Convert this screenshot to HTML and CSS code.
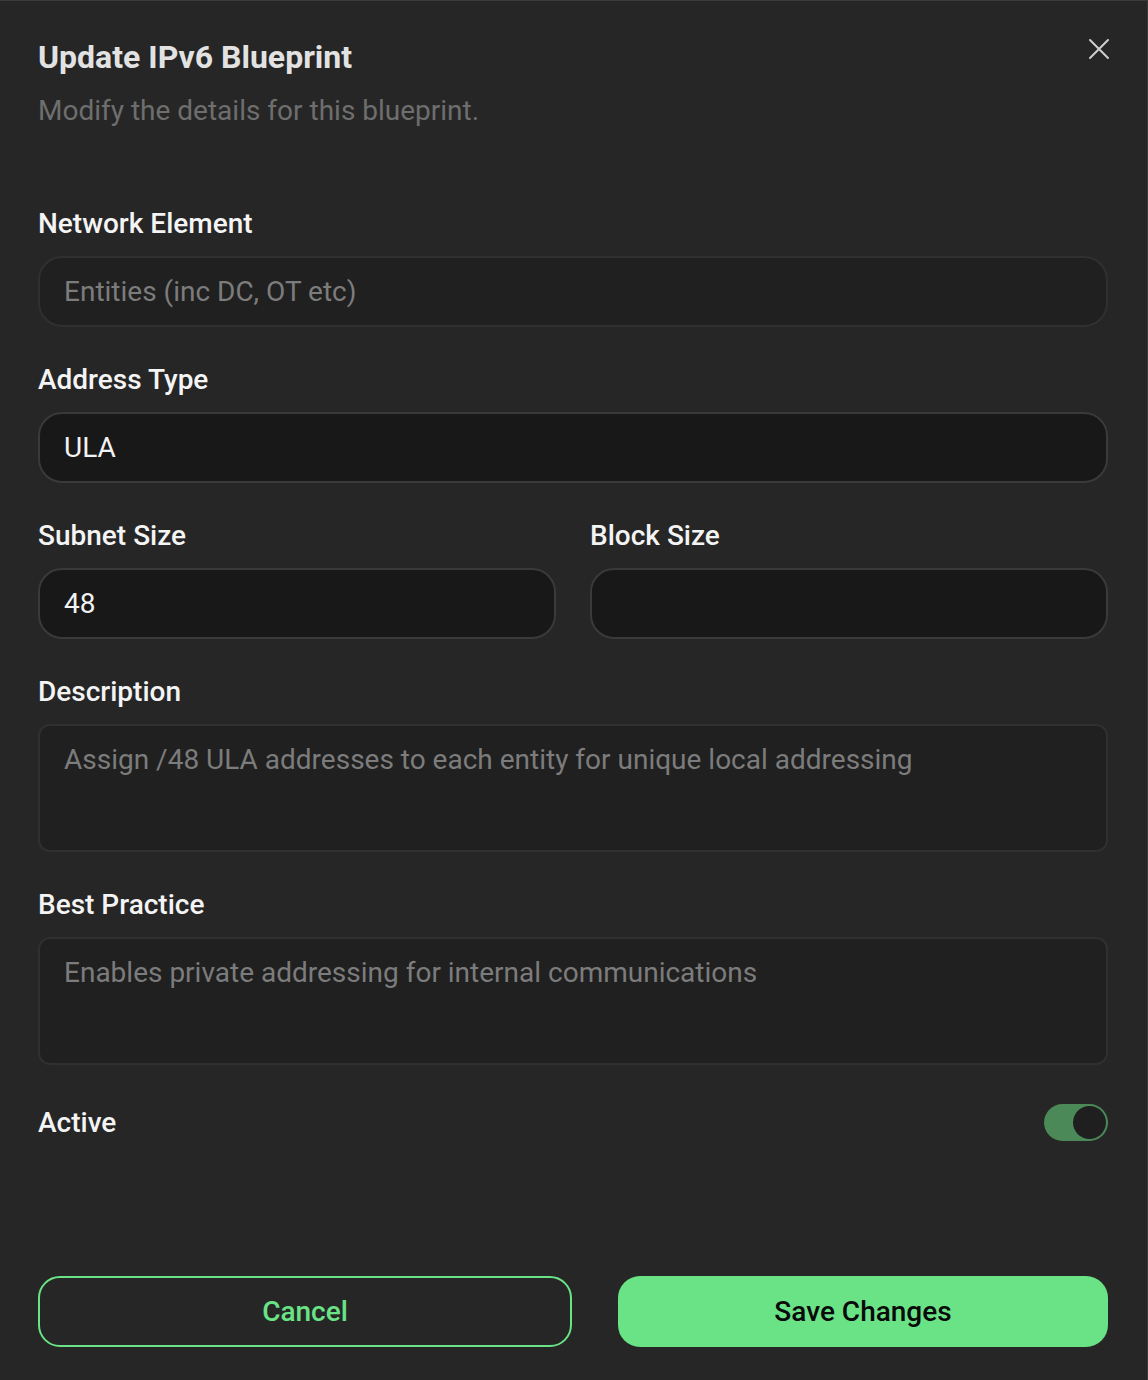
FILE: index.html
```html
<!DOCTYPE html>
<html lang="en">
<head>
  <meta charset="UTF-8" />
  <meta name="viewport" content="width=device-width, initial-scale=1.0" />
  <title>Update IPv6 Blueprint</title>
  <link rel="stylesheet" href="styles.css">
</head>
<body>
  <div class="modal">
    <div class="modal-header">
      <div>
        <h2>Update IPv6 Blueprint</h2>
        <p class="subtitle">Modify the details for this blueprint.</p>
      </div>
      <button class="close-btn" aria-label="Close">
        <svg width="24" height="24" viewBox="0 0 24 24" fill="none" stroke="currentColor" stroke-width="2" stroke-linecap="round">
          <path d="M3 3L21 21M21 3L3 21" />
        </svg>
      </button>
    </div>

    <form class="form">
      <div class="field">
        <label>Network Element</label>
        <input class="input disabled" type="text" placeholder="Entities (inc DC, OT etc)" disabled />
      </div>

      <div class="field">
        <label>Address Type</label>
        <input class="input" type="text" value="ULA" />
      </div>

      <div class="field-row">
        <div class="field">
          <label>Subnet Size</label>
          <input class="input" type="text" value="48" />
        </div>
        <div class="field">
          <label>Block Size</label>
          <input class="input" type="text" value="" />
        </div>
      </div>

      <div class="field">
        <label>Description</label>
        <textarea class="textarea" placeholder="Assign /48 ULA addresses to each entity for unique local addressing" disabled></textarea>
      </div>

      <div class="field">
        <label>Best Practice</label>
        <textarea class="textarea" placeholder="Enables private addressing for internal communications" disabled></textarea>
      </div>

      <div class="switch-row">
        <span class="switch-label">Active</span>
        <span class="switch on"><span class="knob"></span></span>
      </div>
    </form>

    <div class="btn-group">
      <button class="btn cancel">Cancel</button>
      <button class="btn save">Save Changes</button>
    </div>
  </div>
</body>
</html>
```

FILE: styles.css
```css
body {
  margin: 0;
  background-color: #262626;
  font-family: Roboto, "Noto Sans", sans-serif;
  color: #f2f2f2;
}
.modal {
  box-sizing: border-box;
  height: 1380px;
  padding: 38px 39px 33px 38px;
  border-top: 1px solid #3a3a3a;
  border-right: 1px solid #3a3a3a;
  display: flex;
  flex-direction: column;
}
.modal-header {
  display: flex;
  justify-content: space-between;
  align-items: flex-start;
}
h2 {
  margin: 0;
  font-size: 32px;
  font-weight: 700;
  line-height: 36px;
  color: #e2e2e2;
}
.subtitle {
  margin: 18px 0 0;
  font-size: 28px;
  line-height: 36px;
  color: #6e6e6e;
}
.close-btn {
  background: none;
  border: none;
  padding: 0;
  margin: -2px -3px 0 0;
  color: #cfcfcf;
  cursor: pointer;
  width: 24px;
  height: 24px;
}
.form {
  margin-top: 79px;
  display: flex;
  flex-direction: column;
  gap: 37px;
}
.field {
  display: flex;
  flex-direction: column;
  gap: 16px;
  flex: 1;
}
.field label, .switch-label {
  font-size: 28px;
  font-weight: 500;
  line-height: 32px;
  color: #f4f4f4;
}
.field-row {
  display: flex;
  gap: 34px;
}
.input, .textarea {
  box-sizing: border-box;
  width: 100%;
  font-family: inherit;
  font-size: 28px;
  color: #f2f2f2;
  background-color: #181818;
  border: 2px solid #3a3a3a;
  outline: none;
}
.input {
  height: 71px;
  border-radius: 24px;
  padding: 0 24px;
}
.input.disabled {
  background-color: #202020;
  border-color: #303030;
}
.input::placeholder, .textarea::placeholder {
  color: #7c7c7c;
  opacity: 1;
}
.textarea {
  height: 128px;
  border-radius: 12px;
  padding: 18px 24px;
  resize: none;
  background-color: #202020;
  border-color: #303030;
  line-height: 32px;
}
.switch-row {
  display: flex;
  justify-content: space-between;
  align-items: center;
  margin-top: 2px;
}
.switch {
  box-sizing: border-box;
  width: 64px;
  height: 37px;
  border-radius: 19px;
  background-color: #4b8a58;
  display: flex;
  align-items: center;
  justify-content: flex-end;
  padding: 2px;
}
.knob {
  width: 33px;
  height: 33px;
  border-radius: 50%;
  background-color: #1f1f1f;
}
.btn-group {
  margin-top: auto;
  display: flex;
  gap: 46px;
}
.btn {
  height: 71px;
  border-radius: 22px;
  font-family: inherit;
  font-size: 28px;
  font-weight: 500;
  cursor: pointer;
}
.btn.cancel {
  flex: 0 0 534px;
  background: transparent;
  border: 2px solid #69e386;
  color: #69e386;
}
.btn.save {
  flex: 1;
  background-color: #69e386;
  border: none;
  color: #0a0a0a;
}
```
